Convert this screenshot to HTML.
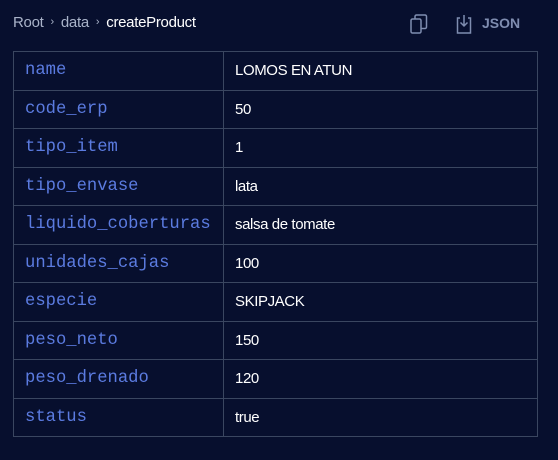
<!DOCTYPE html>
<html><head><style>
body{margin:0;background:#070f2e;width:558px;height:460px;overflow:hidden;font-family:"Liberation Sans",sans-serif;}
.bc{position:absolute;left:13px;top:14px;font-size:15px;color:#a9b3c9;letter-spacing:-0.3px}
.bc .s{font-size:11px;margin:0 7px;position:relative;top:-2px}
.bc b{font-weight:normal;color:#fff}
.json{position:absolute;left:482px;top:15px;font-size:14px;font-weight:bold;color:#7f8db0}
table{position:absolute;left:13px;top:51px;width:525px;border-collapse:collapse}
td{border:1px solid #3a4660;height:37.5px;padding:0 11px;font-size:15px;color:#fff;letter-spacing:-0.4px}
td.k{font-family:"Liberation Mono",monospace;color:#5b7be0;width:187px;font-size:17.2px;letter-spacing:0}
</style></head><body>
<div class="bc">Root<span class="s">›</span>data<span class="s">›</span><b>createProduct</b></div>
<svg style="position:absolute;left:408px;top:12px" width="24" height="24" viewBox="0 0 24 24" fill="none" stroke="#7f8db0" stroke-width="1.5"><rect x="3" y="7" width="10" height="14" rx="1.5"/><path d="M7 7V4.5A1.5 1.5 0 0 1 8.5 3H17a1.5 1.5 0 0 1 1.5 1.5V15A1.5 1.5 0 0 1 17 16.5H13"/></svg>
<svg style="position:absolute;left:454px;top:12px" width="20" height="24" viewBox="0 0 20 24" fill="none" stroke="#7f8db0" stroke-width="1.5"><path d="M6 6H3.5v15h13V6H14"/><path d="M10 3v11M6.5 10.5L10 14l3.5-3.5"/></svg>
<div class="json">JSON</div>
<table>
<tr><td class="k">name</td><td>LOMOS EN ATUN</td></tr>
<tr><td class="k">code_erp</td><td>50</td></tr>
<tr><td class="k">tipo_item</td><td>1</td></tr>
<tr><td class="k">tipo_envase</td><td>lata</td></tr>
<tr><td class="k">liquido_coberturas</td><td>salsa de tomate</td></tr>
<tr><td class="k">unidades_cajas</td><td>100</td></tr>
<tr><td class="k">especie</td><td>SKIPJACK</td></tr>
<tr><td class="k">peso_neto</td><td>150</td></tr>
<tr><td class="k">peso_drenado</td><td>120</td></tr>
<tr><td class="k">status</td><td>true</td></tr>
</table>
</body></html>
